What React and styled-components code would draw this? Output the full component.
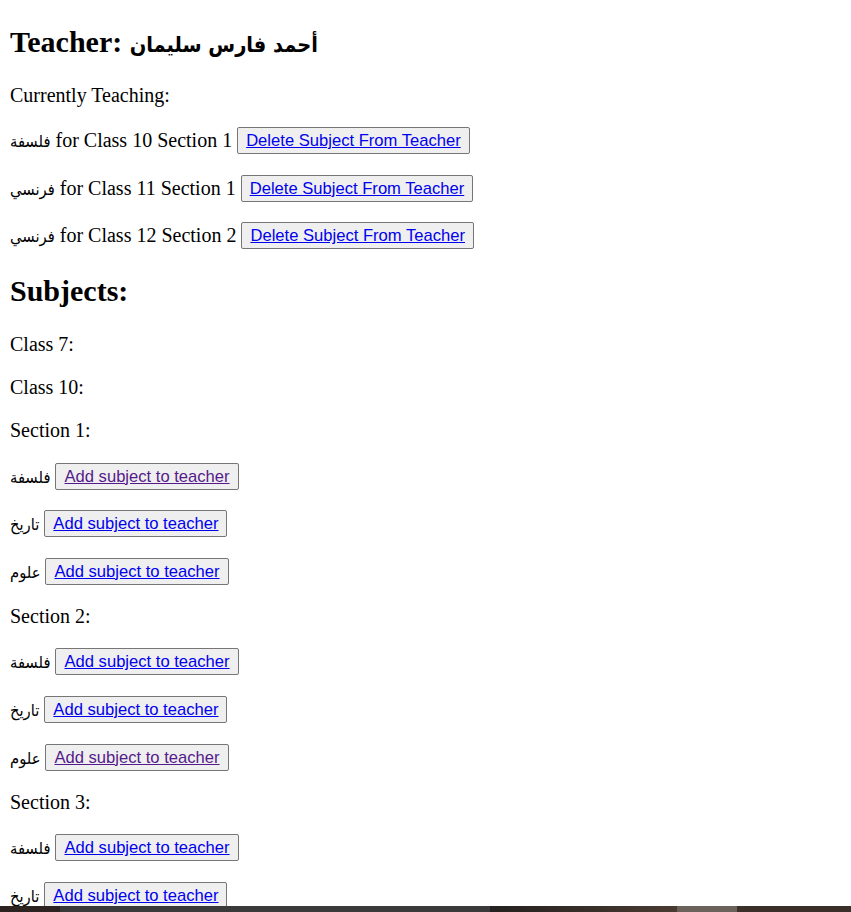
import React from "react";
import styled, { createGlobalStyle } from "styled-components";

const GlobalStyle = createGlobalStyle`
  body {
    margin: 0 10px;
    background: #fff;
    color: #000;
    font-family: "Liberation Serif", "DejaVu Sans", serif;
    font-size: 20px;
  }
`;

const Page = styled.div`
  padding-bottom: 20px;
`;

const Heading = styled.h2`
  font-size: 30px;
  font-weight: bold;
  margin: 24.9px 0;
  line-height: 34px;
  height: 34px;
`;

const Text = styled.p`
  margin: 20px 0;
  line-height: 23px;
`;

const Row = styled.p`
  margin: 20px 0;
  height: 27.6px;
  line-height: 27px;
  display: flex;
  align-items: center;
  gap: 5px;
`;

const Word = styled.span`
  white-space: nowrap;
`;

const Arabic = styled.span`
  font-family: "DejaVu Sans Condensed", "DejaVu Sans", sans-serif;
  font-size: ${(p) => p.$size || "0.82em"};
  line-height: 1;
`;

const ActionButton = styled.button`
  font-family: "Liberation Sans", Arial, sans-serif;
  font-size: 16.6px;
  line-height: 19px;
  padding: 3px 8px;
  background: #efefef;
  border: 1px solid #767676;
  border-radius: 2px;
  cursor: pointer;
`;

const ButtonLink = styled.a`
  color: ${(p) => (p.$visited ? "#551a8b" : "#0000ee")};
  text-decoration: underline;
`;

const Strip = styled.div`
  position: fixed;
  left: 0;
  right: 0;
  bottom: 0;
  height: 6px;
  display: flex;
`;

const StripPart = styled.div`
  width: ${(p) => p.$w}px;
  flex: ${(p) => (p.$grow ? 1 : "none")};
  background: ${(p) => p.$bg};
`;

const teaching = [
  { subject: "فلسفة", cls: 10, section: 1 },
  { subject: "فرنسي", cls: 11, section: 1 },
  { subject: "فرنسي", cls: 12, section: 2 },
];

const sections = [
  {
    name: "Section 1:",
    subjects: [
      { name: "فلسفة", visited: true },
      { name: "تاريخ" },
      { name: "علوم" },
    ],
  },
  {
    name: "Section 2:",
    subjects: [
      { name: "فلسفة" },
      { name: "تاريخ" },
      { name: "علوم", visited: true },
    ],
  },
  {
    name: "Section 3:",
    subjects: [{ name: "فلسفة" }, { name: "تاريخ" }, { name: "علوم" }],
  },
];

export default function App() {
  return (
    <>
      <GlobalStyle />
      <Page>
        <Heading>
          Teacher: <Arabic $size="0.72em">أحمد فارس سليمان</Arabic>
        </Heading>
        <Text>Currently Teaching:</Text>
        {teaching.map((t, i) => (
          <Row key={i}>
            <Word>
              <Arabic>{t.subject}</Arabic> for Class {t.cls} Section {t.section}
            </Word>
            <ActionButton>
              <ButtonLink href="#">Delete Subject From Teacher</ButtonLink>
            </ActionButton>
          </Row>
        ))}

        <Heading>Subjects:</Heading>
        <Text>Class 7:</Text>
        <Text>Class 10:</Text>
        {sections.map((s) => (
          <React.Fragment key={s.name}>
            <Text>{s.name}</Text>
            {s.subjects.map((sub, j) => (
              <Row key={j}>
                <Word>
                  <Arabic>{sub.name}</Arabic>
                </Word>
                <ActionButton>
                  <ButtonLink href="#" $visited={sub.visited}>
                    Add subject to teacher
                  </ButtonLink>
                </ActionButton>
              </Row>
            ))}
          </React.Fragment>
        ))}
      </Page>
      <Strip>
        <StripPart $w={60} $bg="#2c2220" />
        <StripPart $w={430} $bg="#3a3a3a" />
        <StripPart $w={187} $bg="linear-gradient(90deg, #242120, #4a3b32)" />
        <StripPart $w={60} $bg="#6c625c" />
        <StripPart $grow $bg="#3b2f29" />
      </Strip>
    </>
  );
}
